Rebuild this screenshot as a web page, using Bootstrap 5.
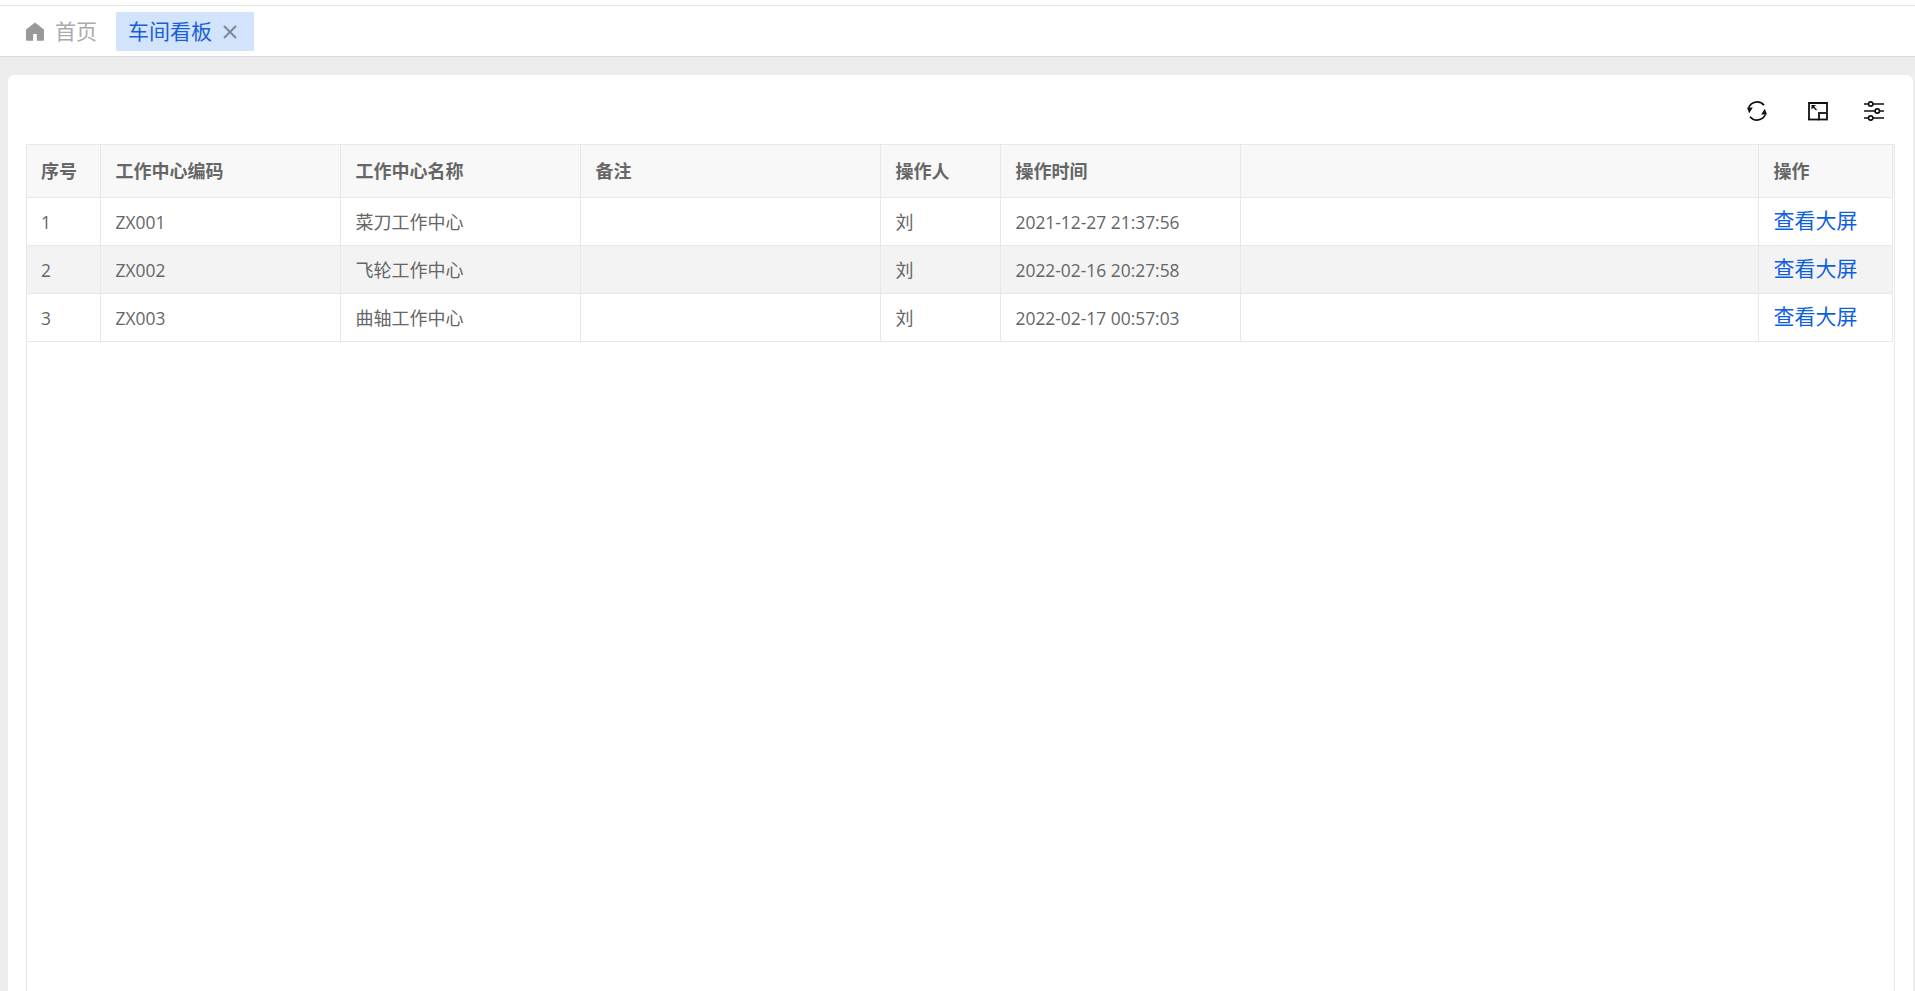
<!DOCTYPE html>
<html lang="zh">
<head>
<meta charset="utf-8">
<title>车间看板</title>
<link rel="stylesheet" href="https://cdn.jsdelivr.net/npm/bootstrap@5.3.0/dist/css/bootstrap.min.css">
<style>
html,body{height:100%;overflow:hidden}
body{background:#ededed;font-family:"Open Sans","Noto Sans CJK SC",sans-serif;color:#666}
.top-strip{height:6px;background:#fff;border-bottom:1px solid #e6e6e6}
.tab-bar{height:51px;background:#fff;border-bottom:1px solid #d8dbe3;padding:6px 0 0 0}
.tab-home{height:39px;padding:0 19px 0 26px;font-size:21px;color:#aaa;gap:11px}
.tab-active{height:39px;width:138px;padding:0 17px 0 12px;font-size:21px;background:#d2e3fc;color:#1a5fd8}
.page-card{position:absolute;left:8px;right:2px;top:75px;bottom:-20px;background:#fff;border-radius:6px;padding:0 18px}
.tool-row{height:69px;padding-top:26px;padding-right:11px}
.tool-row svg{display:block}
.tool-row svg+svg{margin-left:41px}
.tool-row svg+svg+svg{margin-left:36px}
.table-frame{height:900px;border:solid #e8e8e8;border-width:1px 1px 0 1px;background:linear-gradient(#f8f8f8 52px,#fff 52px)}
.data-table{table-layout:fixed;width:1865px;margin:0;font-size:18px;color:#666;border-collapse:collapse}
.data-table th,.data-table td{border:1px solid #e8e8e8;padding:0 15px;vertical-align:middle;white-space:nowrap;color:#666;box-shadow:none}
.data-table tr>*:first-child{border-left:0;padding-left:14px}
.data-table thead tr>*{border-top:0;height:52px;padding-top:2px;font-weight:700;background:#f8f8f8}
.data-table tbody td{height:48px;background:#fff;padding-top:3px}
.data-table tbody tr.alt td{background:#f3f3f3}
.latin{font-size:17.4px}
.view-link{font-size:21px;color:#0d5fdd;text-decoration:none;position:relative;top:-2px}
</style>
</head>
<body>
<div class="top-strip"></div>
<div class="tab-bar d-flex align-items-start">
  <div class="tab-home d-flex align-items-center">
    <svg width="18" height="19" viewBox="0 0 18 19" fill="#999"><path d="M9 .5 18 7.500V17.500c0 .8-.5 1.300-1.300 1.300H10.800V12H7.200v6.800H1.300c-.8 0-1.300-.5-1.300-1.300V7.500z"/></svg>
    <span>首页</span>
  </div>
  <div class="tab-active d-flex align-items-center justify-content-between">
    <span>车间看板</span>
    <svg width="14" height="14" viewBox="0 0 14 14" stroke="#7f8896" stroke-width="2" fill="none"><path d="M1 1l12 12M13 1 1 13"/></svg>
  </div>
</div>
<div class="page-card">
  <div class="tool-row d-flex justify-content-end align-items-start">
    <svg width="20" height="20" viewBox="0 0 20 20" fill="none" stroke="#111" stroke-width="1.800"><path d="M17 4.300A9 9 0 0 0 1.700 6.500"/><path d="M3 15.700A9 9 0 0 0 18.300 13.500"/><path d="M0 6.500h5.800L2.200 12.200z" fill="#111" stroke="none"/><path d="M20 13.500h-5.800L17.800 7.800z" fill="#111" stroke="none"/></svg>
    <svg width="20" height="20" viewBox="0 0 20 20" fill="none" stroke="#111" stroke-width="1.800"><path d="M1 19V2h18v9"/><path d="M0 18.500h11"/><rect x="11" y="12" width="8" height="6.500"/><path d="M4.500 5l4 4" stroke-width="1.400"/><path d="M3.500 4h4.500L3.500 8.500z" fill="#111" stroke="none"/></svg>
    <svg width="20" height="20" viewBox="0 0 20 20" fill="none" stroke="#111" stroke-width="1.700"><path d="M0 3h4.500M9 3h11M0 10h11M15.500 10H20M0 17h4.500M9 17h11"/><circle cx="6.700" cy="3" r="2.200"/><circle cx="13.300" cy="10" r="2.200"/><circle cx="6.700" cy="17" r="2.200"/></svg>
  </div>
  <div class="table-frame">
    <table class="data-table table">
      <colgroup><col style="width:73px"><col style="width:240px"><col style="width:240px"><col style="width:300px"><col style="width:120px"><col style="width:240px"><col style="width:518px"><col style="width:134px"></colgroup>
      <thead><tr><th>序号</th><th>工作中心编码</th><th>工作中心名称</th><th>备注</th><th>操作人</th><th>操作时间</th><th></th><th>操作</th></tr></thead>
      <tbody>
        <tr><td class="latin">1</td><td class="latin">ZX001</td><td>菜刀工作中心</td><td></td><td>刘</td><td class="latin">2021-12-27 21:37:56</td><td></td><td><a class="view-link" href="#">查看大屏</a></td></tr>
        <tr class="alt"><td class="latin">2</td><td class="latin">ZX002</td><td>飞轮工作中心</td><td></td><td>刘</td><td class="latin">2022-02-16 20:27:58</td><td></td><td><a class="view-link" href="#">查看大屏</a></td></tr>
        <tr><td class="latin">3</td><td class="latin">ZX003</td><td>曲轴工作中心</td><td></td><td>刘</td><td class="latin">2022-02-17 00:57:03</td><td></td><td><a class="view-link" href="#">查看大屏</a></td></tr>
      </tbody>
    </table>
  </div>
</div>
<script src="https://cdn.jsdelivr.net/npm/bootstrap@5.3.0/dist/js/bootstrap.bundle.min.js"></script>
</body>
</html>
